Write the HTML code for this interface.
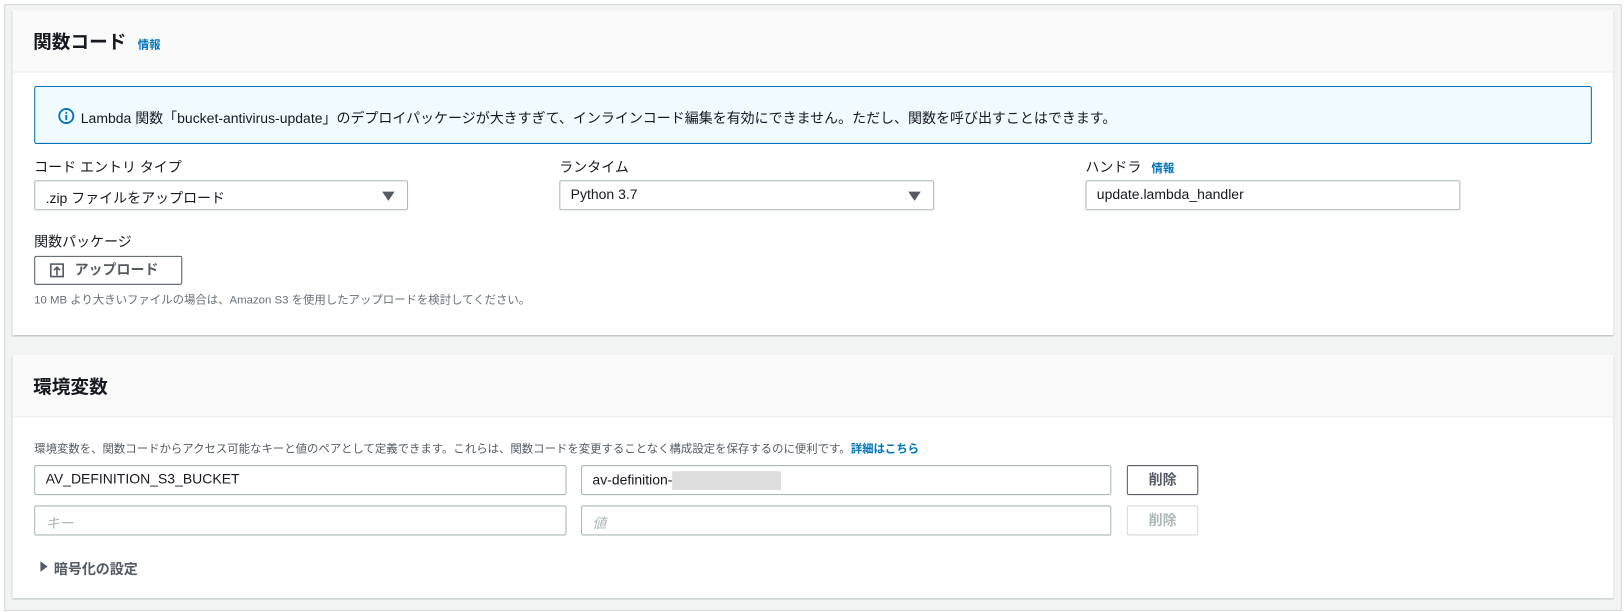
<!DOCTYPE html>
<html><head><meta charset="utf-8"><style>
*{box-sizing:border-box;margin:0;padding:0}
body{width:1624px;height:612px;background:#fff;font-family:"Liberation Sans","Noto Sans CJK JP",sans-serif;color:#16191f;position:relative;overflow:hidden}
#w{position:absolute;left:0;top:0;width:1568px;height:591px;transform:scale(1.0357);transform-origin:0 0}
.outer{position:absolute;left:4px;top:4px;width:1562px;height:586px;background:#f2f3f3;border:1px solid #d5dbdb}
.panel{position:absolute;left:12px;width:1546px;background:#fff;box-shadow:0 1px 1px rgba(0,28,36,.3),1px 1px 1px rgba(0,28,36,.15),-1px 1px 1px rgba(0,28,36,.15)}
.hdr{position:absolute;left:0;top:0;width:100%;height:60px;background:#fafafa;border-bottom:1px solid #eaeded}
.h2{position:absolute;left:20px;font-size:18px;font-weight:bold}
.info{color:#0073bb;font-size:11px;font-weight:bold}
.abs{position:absolute}
.lbl{font-size:13.5px;color:#16191f}
.inp{position:absolute;height:29px;border:1px solid #aab7b8;border-radius:2px;font-size:13.5px;padding:5px 10px;background:#fff}
.arrow{position:absolute;right:12px;top:10px;width:0;height:0;border-left:6px solid transparent;border-right:6px solid transparent;border-top:9px solid #545b64}
.btn{position:absolute;border:1px solid #545b64;border-radius:2px;font-size:13.5px;font-weight:bold;color:#545b64;text-align:center;background:#fff}
</style></head><body><div id="w">
<div class="outer"></div>
<div class="panel" style="top:10px;height:314px">
  <div class="hdr"></div>
  <div class="h2" style="top:17px">関数コード <span class="info" style="margin-left:6px">情報</span></div>
  <div class="abs" style="left:21px;top:73px;width:1504px;height:56px;background:#f1faff;border:1px solid #0073bb;border-radius:2px"></div>
  <svg class="abs" style="left:44px;top:94px" width="16" height="16" viewBox="0 0 16 16"><circle cx="8" cy="8" r="6.8" fill="none" stroke="#0073bb" stroke-width="1.8"/><rect x="7.1" y="7" width="1.8" height="5" fill="#0073bb"/><rect x="7.1" y="4" width="1.8" height="1.8" fill="#0073bb"/></svg>
  <div class="abs" style="left:66px;top:93px;font-size:13.5px">Lambda 関数「bucket-antivirus-update」のデプロイパッケージが大きすぎて、インラインコード編集を有効にできません。ただし、関数を呼び出すことはできます。</div>
  <div class="abs lbl" style="left:21px;top:140px">コード エントリ タイプ</div>
  <div class="inp" style="left:21px;top:164px;width:361px">.zip ファイルをアップロード<div class="arrow"></div></div>
  <div class="abs lbl" style="left:528px;top:140px">ランタイム</div>
  <div class="inp" style="left:528px;top:164px;width:362px">Python 3.7<div class="arrow"></div></div>
  <div class="abs lbl" style="left:1036px;top:140px">ハンドラ <span class="info" style="margin-left:6px">情報</span></div>
  <div class="inp" style="left:1036px;top:164px;width:362px">update.lambda_handler</div>
  <div class="abs lbl" style="left:21px;top:212px">関数パッケージ</div>
  <div class="btn" style="left:21px;top:237px;width:143px;height:28px;line-height:26px;text-align:left;padding-left:38px">アップロード</div>
  <svg class="abs" style="left:36px;top:244px" width="14" height="14" viewBox="0 0 14 14"><path d="M1 1h12v12H1z" fill="none" stroke="#545b64" stroke-width="1.6"/><path d="M7 12V4M4 7l3-3 3 3" fill="none" stroke="#545b64" stroke-width="1.6"/></svg>
  <div class="abs" style="left:21px;top:271px;font-size:11px;color:#687078">10 MB より大きいファイルの場合は、Amazon S3 を使用したアップロードを検討してください。</div>
</div>
<div class="panel" style="top:343px;height:235px">
  <div class="hdr"></div>
  <div class="h2" style="top:17px">環境変数</div>
  <div class="abs" style="left:21px;top:82px;font-size:11px;color:#545b64">環境変数を、関数コードからアクセス可能なキーと値のペアとして定義できます。これらは、関数コードを変更することなく構成設定を保存するのに便利です。<span class="info">詳細はこちら</span></div>
  <div class="inp" style="left:21px;top:106px;width:514px">AV_DEFINITION_S3_BUCKET</div>
  <div class="inp" style="left:549px;top:106px;width:512px">av-definition-<span style="display:inline-block;width:105px;height:18px;background:#ddd;vertical-align:middle"></span></div>
  <div class="btn" style="left:1076px;top:106px;width:69px;height:29px;line-height:27px">削除</div>
  <div class="inp" style="left:21px;top:145px;width:514px;color:#aab7b8;font-style:italic">キー</div>
  <div class="inp" style="left:549px;top:145px;width:512px;color:#aab7b8;font-style:italic">値</div>
  <div class="btn" style="left:1076px;top:145px;width:69px;height:29px;line-height:27px;border-color:#d5dbdb;color:#aab7b8">削除</div>
  <div class="abs" style="left:27px;top:199px;width:0;height:0;border-top:5px solid transparent;border-bottom:5px solid transparent;border-left:7px solid #545b64"></div>
  <div class="abs" style="left:40px;top:195px;font-size:13.5px;font-weight:bold;color:#545b64">暗号化の設定</div>
</div>
</div></body></html>
